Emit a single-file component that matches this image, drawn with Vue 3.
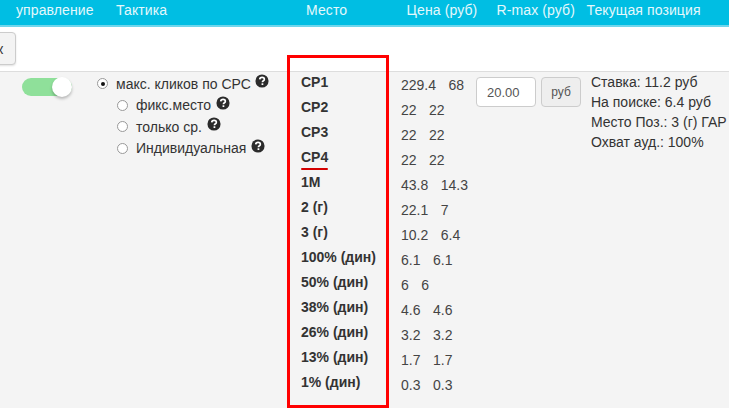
<script setup>
const headers = ['управление', 'Тактика', 'Место', 'Цена (руб)', 'R-max (руб)', 'Текущая позиция']

const tactics = [
  { label: 'фикс.место' },
  { label: 'только ср.' },
  { label: 'Индивидуальная' },
]

const places = [
  { name: 'СР1', a: '229.4', b: '68' },
  { name: 'СР2', a: '22', b: '22' },
  { name: 'СР3', a: '22', b: '22' },
  { name: 'СР4', a: '22', b: '22', marked: true },
  { name: '1М', a: '43.8', b: '14.3' },
  { name: '2 (г)', a: '22.1', b: '7' },
  { name: '3 (г)', a: '10.2', b: '6.4' },
  { name: '100% (дин)', a: '6.1', b: '6.1' },
  { name: '50% (дин)', a: '6', b: '6' },
  { name: '38% (дин)', a: '4.6', b: '4.6' },
  { name: '26% (дин)', a: '3.2', b: '3.2' },
  { name: '13% (дин)', a: '1.7', b: '1.7' },
  { name: '1% (дин)', a: '0.3', b: '0.3' },
]

const current = ['Ставка: 11.2 руб', 'На поиске: 6.4 руб', 'Место Поз.: 3 (г) ГАР', 'Охват ауд.: 100%']
</script>

<template>
  <div class="page">
    <div class="head">
      <span v-for="h in headers" :key="h">{{ h }}</span>
    </div>

    <div class="toolbar">
      <button class="back">к</button>
    </div>

    <div class="row">
      <div class="toggle-cell">
        <span class="toggle"><span class="knob"></span></span>
      </div>

      <div class="tactics">
        <label class="tactic">
          <span class="radio checked"></span>
          <span>макс. кликов по СРС</span>
          <svg class="help" viewBox="0 0 16 16">
            <circle cx="8" cy="8" r="7.5" fill="#2b2b2b" />
            <path d="M5.4 6.2c.1-1.5 1.2-2.3 2.7-2.3 1.5 0 2.6.9 2.6 2.1 0 1.1-.7 1.6-1.4 2-.6.4-.8.7-.8 1.3" fill="none" stroke="#fff" stroke-width="1.9" />
            <rect x="7.5" y="10.6" width="2" height="2" fill="#fff" />
          </svg>
        </label>
        <label v-for="t in tactics" :key="t.label" class="tactic sub">
          <span class="radio"></span>
          <span>{{ t.label }}</span>
          <svg class="help" viewBox="0 0 16 16">
            <circle cx="8" cy="8" r="7.5" fill="#2b2b2b" />
            <path d="M5.4 6.2c.1-1.5 1.2-2.3 2.7-2.3 1.5 0 2.6.9 2.6 2.1 0 1.1-.7 1.6-1.4 2-.6.4-.8.7-.8 1.3" fill="none" stroke="#fff" stroke-width="1.9" />
            <rect x="7.5" y="10.6" width="2" height="2" fill="#fff" />
          </svg>
        </label>
      </div>

      <div class="places">
        <div v-for="p in places" :key="p.name" class="place">
          <span :class="{ marked: p.marked }">{{ p.name }}</span>
        </div>
      </div>

      <div class="prices">
        <div v-for="p in places" :key="p.name" class="price">
          <span>{{ p.a }}</span><span>{{ p.b }}</span>
        </div>
      </div>

      <div class="rmax">
        <input class="rmax-input" value="20.00" />
        <span class="addon">руб</span>
      </div>

      <div class="current">
        <div v-for="c in current" :key="c">{{ c }}</div>
      </div>
    </div>

    <div class="highlight"></div>
  </div>
</template>

<style>
html, body {
  margin: 0;
  overflow: hidden;
}
</style>

<style scoped>
.page {
  position: relative;
  width: 729px;
  height: 408px;
  overflow: hidden;
  display: flex;
  flex-direction: column;
  background: #fff;
  color: #333;
  font-family: "Liberation Sans", Arial, sans-serif;
  font-size: 14px;
}

.head {
  display: grid;
  grid-template-columns: 100px 190px 100.6px 90px 90px 1fr;
  height: 25px;
  padding-left: 16px;
  line-height: 20px;
  background: #00bee3;
  border-bottom: 2px solid #6fd6ec;
  color: #e4f8fc;
  white-space: nowrap;
  letter-spacing: 0.1px;
}

.toolbar {
  height: 44px;
  padding-top: 5px;
  box-sizing: border-box;
}

.back {
  display: block;
  width: 40px;
  height: 33px;
  margin-left: -24px;
  padding: 0 0 0 20px;
  text-align: left;
  background: #f3f3f3;
  border: 1px solid #ccc;
  border-radius: 4px;
  color: #333;
  font: 14px "Liberation Sans", Arial, sans-serif;
  box-shadow: 0 1px 2px rgba(0, 0, 0, 0.12);
}

.row {
  flex: 1;
  display: grid;
  grid-template-columns: 97px 204px 100px 75px 115px 1fr;
  background: #f4f4f4;
  border-top: 1px solid #ddd;
  white-space: nowrap;
}

.toggle-cell {
  padding: 6px 0 0 22px;
}

.toggle {
  position: relative;
  display: block;
  width: 50px;
  height: 18px;
  border-radius: 9px;
  background: #8fe09a;
}

.knob {
  position: absolute;
  top: -1px;
  right: 0;
  width: 20px;
  height: 20px;
  border-radius: 50%;
  background: #fff;
  box-shadow: 0 2px 3px rgba(0, 0, 0, 0.25);
}

.tactics {
  padding-top: 1px;
}

.tactic {
  display: flex;
  align-items: center;
  height: 21.5px;
  gap: 8px;
}

.tactic.sub {
  padding-left: 20px;
}

.radio {
  position: relative;
  width: 11px;
  height: 11px;
  box-sizing: border-box;
  border: 1px solid #999;
  border-radius: 50%;
  background: #fff;
}

.radio.checked::after {
  content: "";
  position: absolute;
  left: 2.5px;
  top: 2.5px;
  width: 4px;
  height: 4px;
  border-radius: 50%;
  background: #111;
}

.help {
  width: 14px;
  height: 14px;
  margin: -5px 0 0 -4px;
}

.tactic.sub .help {
  margin-left: -3px;
}

.places {
  font-weight: bold;
}

.place {
  height: 25px;
  line-height: 20px;
}

.marked {
  position: relative;
  display: inline-block;
}

.marked::after {
  content: "";
  position: absolute;
  left: 0;
  right: 0;
  bottom: -3px;
  height: 2px;
  background: #d40000;
  border-radius: 1px;
}

.prices {
  padding-top: 3px;
  color: #444;
}

.price {
  display: flex;
  gap: 12.5px;
  height: 25px;
  line-height: 20px;
}

.rmax {
  display: flex;
  gap: 5px;
  padding-top: 5px;
  align-items: flex-start;
}

.rmax-input {
  width: 60px;
  height: 30px;
  box-sizing: border-box;
  padding: 0 10px;
  background: #fff;
  border: 1px solid #ccc;
  border-radius: 4px;
  color: #555;
  font: 13px "Liberation Sans", Arial, sans-serif;
}

.addon {
  width: 40px;
  height: 30px;
  box-sizing: border-box;
  line-height: 28px;
  text-align: center;
  background: #eee;
  border: 1px solid #ccc;
  border-radius: 4px;
  color: #555;
  font-size: 12px;
}

.current {
  line-height: 20px;
}

.highlight {
  position: absolute;
  left: 287px;
  top: 55px;
  width: 102px;
  height: 353px;
  box-sizing: border-box;
  border: 3px solid #f00;
}
</style>
